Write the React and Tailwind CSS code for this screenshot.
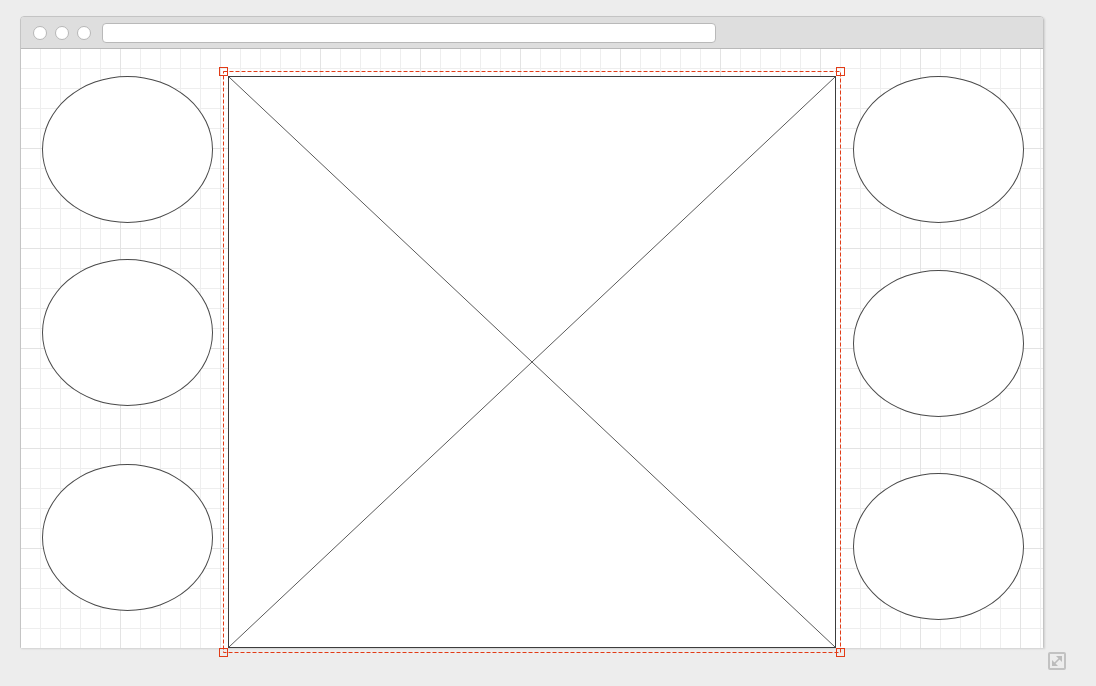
import React from 'react'

const RED = '#e23b16'

function Ellipse({ className = '' }) {
  return <div className={`w-[171px] h-[147px] rounded-[50%] border border-[#4a4a4a] bg-white ${className}`} />
}

function Selection() {
  return (
    <svg className="absolute -left-[6px] -top-[6px] overflow-visible pointer-events-none" width="618" height="582">
      <rect x="0.5" y="0.5" width="617" height="581" fill="none" stroke={RED} strokeWidth="1" strokeDasharray="4 2" />
      {[[0, 0], [617, 0], [0, 581], [617, 581]].map(([x, y]) => (
        <rect key={`${x}-${y}`} x={x - 3.5} y={y - 3.5} width="8" height="8" fill="none" stroke={RED} strokeWidth="1" />
      ))}
    </svg>
  )
}

function ImagePlaceholder() {
  return (
    <div className="relative w-[608px] h-[572px] mt-[27px] ml-[15px] border border-[#3c3c3c] bg-white shrink-0">
      <svg className="absolute inset-0 w-full h-full" viewBox="0 0 606 570" preserveAspectRatio="none">
        <line x1="0" y1="0" x2="606" y2="570" stroke="#5a5a5a" strokeWidth="1" />
        <line x1="606" y1="0" x2="0" y2="570" stroke="#5a5a5a" strokeWidth="1" />
      </svg>
      <Selection />
    </div>
  )
}

export default function App() {
  return (
    <div className="w-[1096px] h-[686px] bg-[#ededed] pt-[16px] pl-[20px] overflow-hidden font-['Liberation_Sans',sans-serif]">
      <div className="w-[1024px] h-[632px] border border-[#c4c4c4] rounded-t-[4px] flex flex-col shadow-[1px_1px_2px_rgba(0,0,0,0.12)]">
        <div className="h-[32px] shrink-0 bg-[#dedede] border-b border-[#b9b9b9] rounded-t-[3px] flex items-center pl-[12px]">
          <div className="flex gap-[8px]">
            <span className="w-[14px] h-[14px] rounded-full bg-white border border-[#b7b7b7]" />
            <span className="w-[14px] h-[14px] rounded-full bg-white border border-[#b7b7b7]" />
            <span className="w-[14px] h-[14px] rounded-full bg-white border border-[#b7b7b7]" />
          </div>
          <div className="ml-[11px] w-[614px] h-[20px] bg-white border border-[#b9b9b9] rounded-[4px]" />
        </div>
        <div className="flex-1 flex pl-[21px] bg-white bg-[image:linear-gradient(to_right,#e3e3e3_1px,transparent_1px),linear-gradient(to_bottom,#e3e3e3_1px,transparent_1px),linear-gradient(to_right,#eeeeee_1px,transparent_1px),linear-gradient(to_bottom,#eeeeee_1px,transparent_1px)] bg-[size:100px_100px,100px_100px,20px_20px,20px_20px] bg-[position:99px_99px,99px_99px,19px_19px,19px_19px]">
          <div className="flex flex-col pt-[27px] shrink-0">
            <Ellipse />
            <Ellipse className="mt-[36px]" />
            <Ellipse className="mt-[58px]" />
          </div>
          <ImagePlaceholder />
          <div className="flex flex-col pt-[27px] ml-[17px] shrink-0">
            <Ellipse />
            <Ellipse className="mt-[47px]" />
            <Ellipse className="mt-[56px]" />
          </div>
        </div>
      </div>
      <div className="pl-[1028px] mt-[4px]">
        <div className="w-[18px] h-[18px] border-2 border-[#c2c2c2] rounded-[2px] flex items-center justify-center">
          <svg width="12" height="12" viewBox="0 0 12 12">
            <line x1="2" y1="10" x2="10" y2="2" stroke="#bcbcbc" strokeWidth="1.6" />
            <polygon points="5,1 11,1 11,7" fill="#bcbcbc" />
            <polygon points="1,5 1,11 7,11" fill="#bcbcbc" />
          </svg>
        </div>
      </div>
    </div>
  )
}
